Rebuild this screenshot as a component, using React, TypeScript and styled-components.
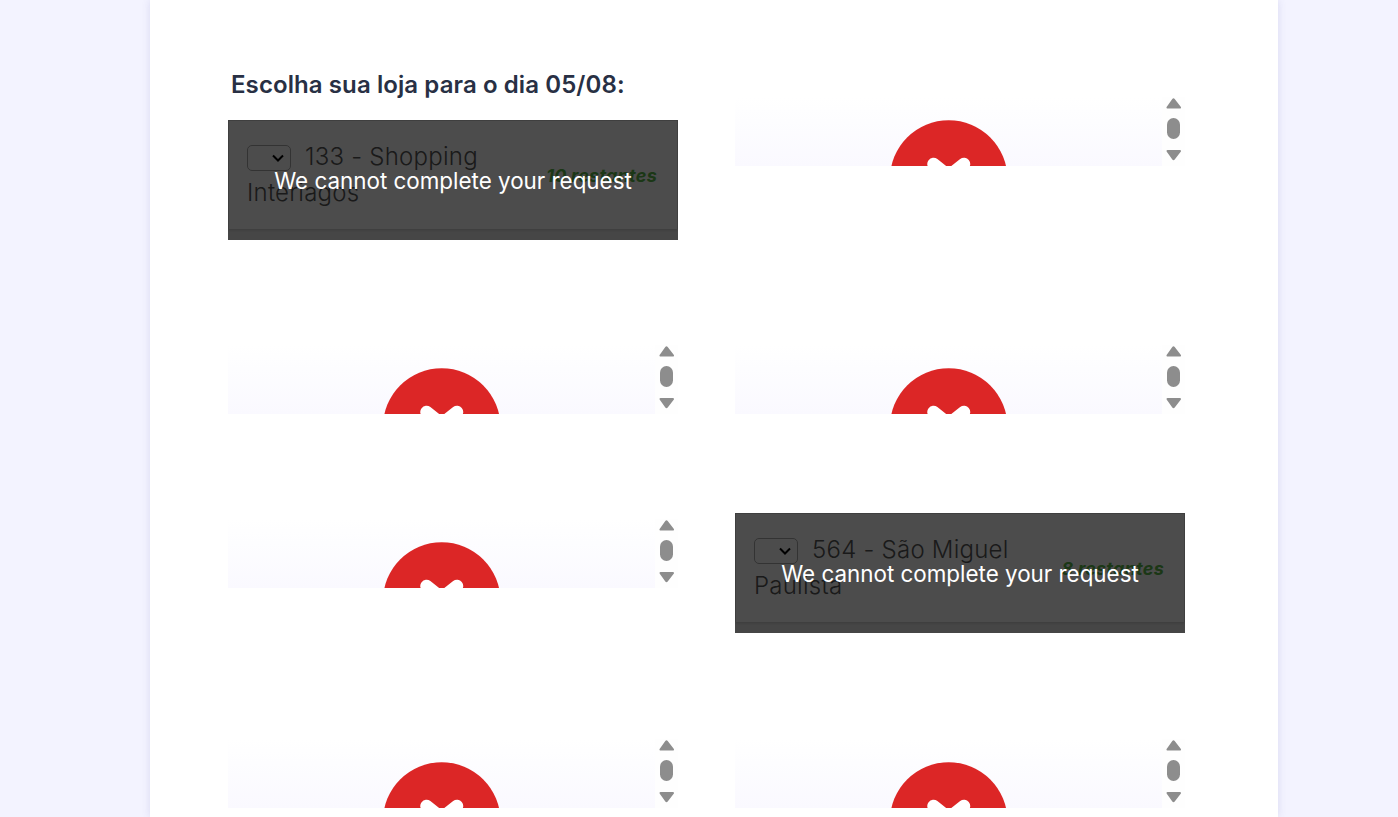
import React from "react";
import styled, { createGlobalStyle } from "styled-components";

const Global = createGlobalStyle`
  html, body { margin: 0; padding: 0; height: 817px; overflow: hidden; background: #f3f3ff; }
  body { font-family: Inter, "Liberation Sans", sans-serif; }
  #root { height: 817px; overflow: hidden; }
`;

const Page = styled.main`
  width: 1128px;
  height: 817px;
  margin: 0 auto 0 150px;
  padding: 0 0 0 78px;
  box-sizing: border-box;
  background: #fff;
  box-shadow: 0 0 8px rgba(90, 90, 170, 0.16);
  display: flex;
  gap: 57px;
  align-items: flex-start;
`;

const Column = styled.div<{ $top?: number }>`
  width: 450px;
  flex: none;
  padding-top: ${(p) => p.$top ?? 0}px;
  display: flex;
  flex-direction: column;
`;

const Heading = styled.h2`
  margin: 70px 0 21px 3px;
  height: 29px;
  font-size: 24px;
  letter-spacing: 0.09px;
  line-height: 29px;
  font-weight: 600;
  color: #283044;
  white-space: nowrap;
`;

const Frame = styled.div<{ $after?: number }>`
  flex: none;
  width: 450px;
  height: 69px;
  margin-bottom: ${(p) => p.$after ?? 0}px;
  display: flex;
  overflow: hidden;
  background: #fff;
`;

const Preview = styled.div`
  width: 427px;
  height: 69px;
  background: linear-gradient(#ffffff 0%, #fdfdff 35%, #faf9ff 100%);
  display: flex;
  justify-content: center;
  padding-top: 23px;
  box-sizing: border-box;
`;

const Scroller = styled.div`
  width: 23px;
  height: 69px;
  flex: none;
  background: #fefefe;
`;

const ErrorCard = styled.div<{ $after?: number }>`
  position: relative;
  flex: none;
  width: 450px;
  height: 120px;
  margin-bottom: ${(p) => p.$after ?? 0}px;
  overflow: hidden;
  background: #ececec;
`;

const Row = styled.div`
  height: 109px;
  padding: 18px 20px 0 18px;
  box-sizing: border-box;
  display: flex;
  justify-content: space-between;
  align-items: flex-start;
  background: #fff;
  border: 1px solid #d2d2d2;
  border-bottom: none;
  box-shadow: 0 1px 3px rgba(0, 0, 0, 0.18);
`;

const StoreName = styled.label`
  width: 268px;
  font-size: 24px;
  font-weight: 300;
  letter-spacing: 0.24px;
  line-height: 36px;
  color: #585858;
`;

const chevron = `url("data:image/svg+xml,%3Csvg xmlns='http://www.w3.org/2000/svg' width='14' height='10'%3E%3Cpath d='M2 2.500 7 7.500 12 2.500' fill='none' stroke='black' stroke-width='2'/%3E%3C/svg%3E")`;

const StoreSelect = styled.select`
  width: 44px;
  height: 26px;
  margin: 0 14px 0 0;
  vertical-align: 3px;
  appearance: none;
  border: 1px solid #aaa;
  border-radius: 5px;
  background: transparent ${chevron} no-repeat right 5px center;
`;

const Remaining = styled.span`
  margin-top: 27px;
  font-size: 18px;
  letter-spacing: 0.25px;
  font-weight: 700;
  font-style: italic;
  line-height: 20px;
  color: #5cb84a;
  white-space: nowrap;
`;

const Veil = styled.div`
  position: absolute;
  inset: 0;
  background: rgba(0, 0, 0, 0.7);
  display: flex;
  justify-content: center;
  padding-top: 45px;
  box-sizing: border-box;
  font-size: 22.4px;
  line-height: 32px;
  color: #fff;
  white-space: nowrap;
`;

const Drawing = styled.svg`
  flex: none;
  display: block;
  filter: blur(0.35px);
`;

const StatusIcon = () => (
  <Drawing width="118" height="118" viewBox="0 0 118 118">
    <circle cx="58.700" cy="59" r="58.800" fill="#dc2626" />
    <path d="M43.500 44 58.700 56 74 44M43.500 73 74 44" stroke="#fff" strokeWidth="12.500" strokeLinecap="round" strokeLinejoin="round" fill="none" />
  </Drawing>
);

const ScrollIcon = () => (
  <Drawing width="23" height="69" viewBox="0 0 23 69">
    <path d="M4.800 9.800 10.300 2a1.500 1.500 0 0 1 2.400 0l6 7.800a1 1 0 0 1-.8 1.700H5.600a1 1 0 0 1-.8-1.700Z" fill="#8d8d8d" />
    <rect x="5" y="21" width="13" height="21" rx="6.500" fill="#8d8d8d" />
    <path d="M4.800 54.700a1 1 0 0 1 .8-1.700h12.300a1 1 0 0 1 .8 1.700l-6 7.800a1.500 1.500 0 0 1-2.400 0Z" fill="#8d8d8d" />
  </Drawing>
);

const Tile = ({ after }: { after?: number }) => (
  <Frame $after={after}>
    <Preview><StatusIcon /></Preview>
    <Scroller><ScrollIcon /></Scroller>
  </Frame>
);

const Blocked = ({ name, left, after }: { name: string; left: string; after?: number }) => (
  <ErrorCard $after={after}>
    <Row>
      <StoreName>
        <StoreSelect aria-label={name} />
        {name}
      </StoreName>
      <Remaining>{left}</Remaining>
    </Row>
    <Veil>We cannot complete your request</Veil>
  </ErrorCard>
);

export default function App() {
  return (
    <>
      <Global />
      <Page>
        <Column>
          <Heading>Escolha sua loja para o dia 05/08:</Heading>
          <Blocked name="133 - Shopping Interiagos" left="10 restantes" after={105} />
          <Tile after={105} />
          <Tile after={151} />
          <Tile />
        </Column>
        <Column $top={97}>
          <Tile after={179} />
          <Tile after={99} />
          <Blocked name="564 - São Miguel Paulista" left="8 restantes" after={106} />
          <Tile />
        </Column>
      </Page>
    </>
  );
}
